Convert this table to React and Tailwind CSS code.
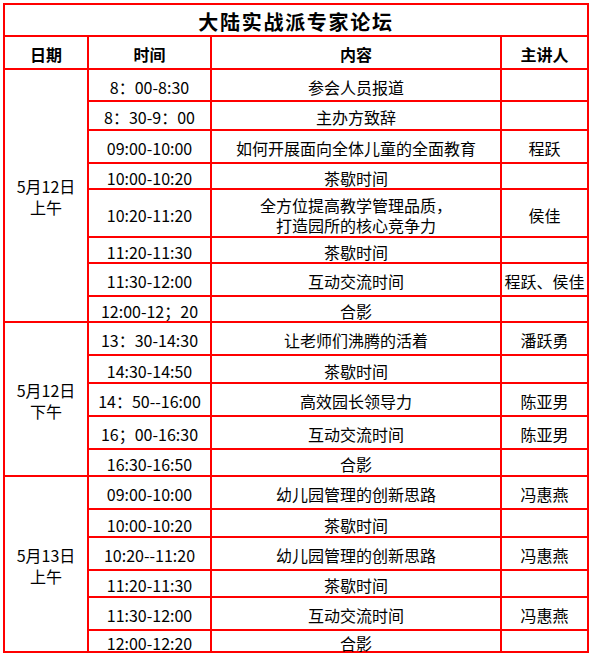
const sections = [
  {
    date: ['5月12日', '上午'],
    rows: [
      ['8：00-8:30', '参会人员报道', ''],
      ['8：30-9：00', '主办方致辞', ''],
      ['09:00-10:00', '如何开展面向全体儿童的全面教育', '程跃'],
      ['10:00-10:20', '茶歇时间', ''],
      ['10:20-11:20', ['全方位提高教学管理品质，', '打造园所的核心竞争力'], '侯佳'],
      ['11:20-11:30', '茶歇时间', ''],
      ['11:30-12:00', '互动交流时间', '程跃、侯佳'],
      ['12:00-12；20', '合影', ''],
    ],
  },
  {
    date: ['5月12日', '下午'],
    rows: [
      ['13：30-14:30', '让老师们沸腾的活着', '潘跃勇'],
      ['14:30-14:50', '茶歇时间', ''],
      ['14：50--16:00', '高效园长领导力', '陈亚男'],
      ['16；00-16:30', '互动交流时间', '陈亚男'],
      ['16:30-16:50', '合影', ''],
    ],
  },
  {
    date: ['5月13日', '上午'],
    rows: [
      ['09:00-10:00', '幼儿园管理的创新思路', '冯惠燕'],
      ['10:00-10:20', '茶歇时间', ''],
      ['10:20--11:20', '幼儿园管理的创新思路', '冯惠燕'],
      ['11:20-11:30', '茶歇时间', ''],
      ['11:30-12:00', '互动交流时间', '冯惠燕'],
      ['12:00-12:20', '合影', ''],
    ],
  },
];

const rowSpans = ['row-span-8', 'row-span-5', 'row-span-6'];

const Cell = ({ children, className = '' }) => (
  <div className={`bg-white flex flex-col items-center justify-center pt-[3px] text-[16px] text-black ${className}`}>
    {children}
  </div>
);

export default function App() {
  return (
    <div className="w-[591px] h-[655px] bg-white pt-[3px] pl-[3px] font-['Noto_Sans_CJK_SC',sans-serif]">
      <div className="inline-grid grid-cols-[82px_121px_288px_85px] grid-rows-[30px_31px_30px_27px_31px_24px_46px_24px_31px_24px_31px_26px_31px_31px_25px_31px_26px_31px_25px_31px_20px] gap-[2px] p-[2px] bg-[#ff0000]">
        <div className="col-span-4 bg-white flex items-center justify-center pt-[3px] text-[20px] leading-[24px] font-bold tracking-[1.7px] text-black">
          大陆实战派专家论坛
        </div>
        {['日期', '时间', '内容', '主讲人'].map((h) => (
          <Cell key={h} className="font-bold leading-[20px]">{h}</Cell>
        ))}
        {sections.map((s, si) => (
          <div key={si} className="contents">
            <Cell className={`${rowSpans[si]} col-start-1 leading-[21px]`}>
              {s.date.map((d) => (
                <span key={d}>{d}</span>
              ))}
            </Cell>
            {s.rows.map((r, ri) => (
              <div key={ri} className="contents">
                <Cell className="col-start-2 leading-[20px]">{r[0]}</Cell>
                <Cell className="leading-[20px]">
                  {Array.isArray(r[1]) ? r[1].map((l) => <span key={l}>{l}</span>) : r[1]}
                </Cell>
                <Cell className="leading-[20px]">{r[2]}</Cell>
              </div>
            ))}
          </div>
        ))}
      </div>
    </div>
  );
}
